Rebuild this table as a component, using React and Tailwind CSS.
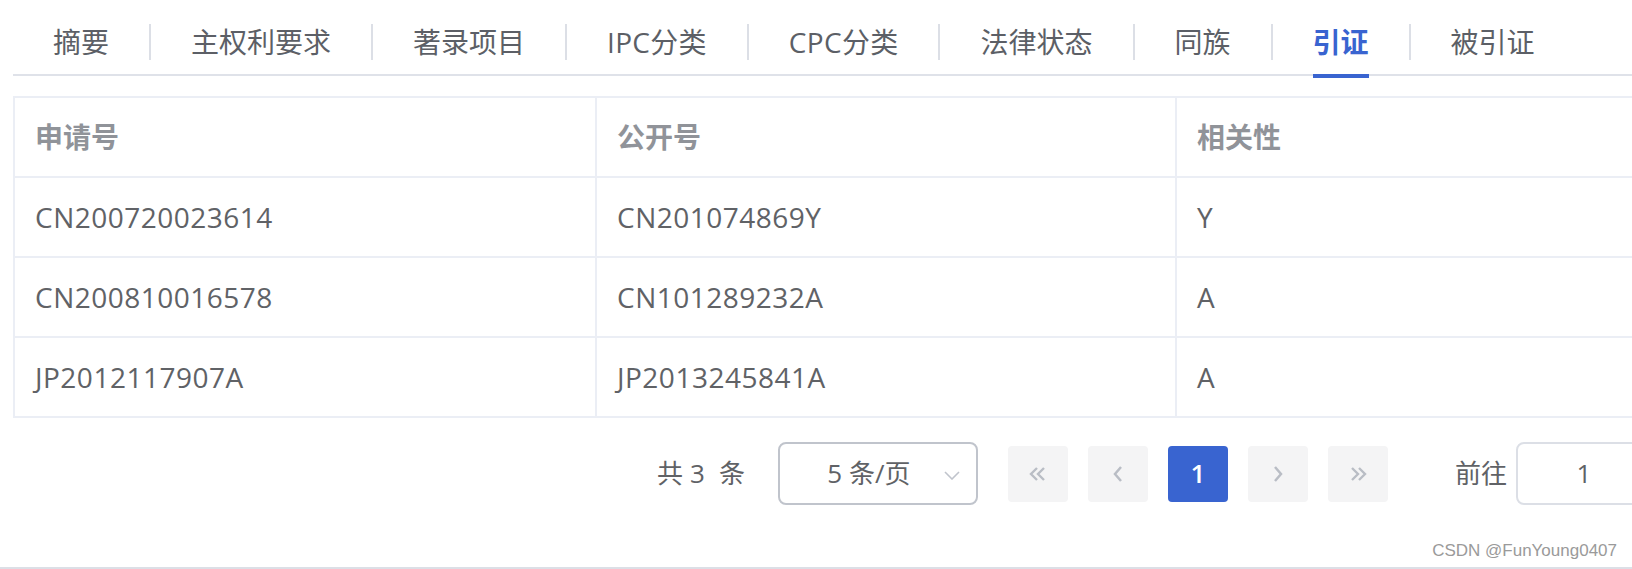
import React, { Fragment } from "react";

const FONT = "font-['Open_Sans','Noto_Sans_CJK_SC',sans-serif]";

const tabs = ["摘要", "主权利要求", "著录项目", "IPC分类", "CPC分类", "法律状态", "同族", "引证", "被引证"];
const rows = [
  ["CN200720023614", "CN201074869Y", "Y"],
  ["CN200810016578", "CN101289232A", "A"],
  ["JP2012117907A", "JP2013245841A", "A"],
];
const widths = ["w-[582px]", "w-[580px]", "w-[582px]"];

function Chevron({ dir = "left", double = false }) {
  if (double) {
    const pts =
      dir === "left"
        ? ["8,2 2,8 8,14", "15,2 9,8 15,14"]
        : ["3,2 9,8 3,14", "10,2 16,8 10,14"];
    return (
      <svg width="18" height="16" viewBox="0 0 18 16" fill="none" stroke="#b9bdc5" strokeWidth="2.4">
        {pts.map((p) => (
          <polyline key={p} points={p} />
        ))}
      </svg>
    );
  }
  const p = dir === "left" ? "9,2 3,9 9,16" : "3,2 9,9 3,16";
  return (
    <svg width="12" height="18" viewBox="0 0 12 18" fill="none" stroke="#b9bdc5" strokeWidth="2.5">
      <polyline points={p} />
    </svg>
  );
}

function Cell({ children, head, w }) {
  return (
    <div
      className={
        w +
        " h-[80px] flex items-center pl-[20px] border-r-2 border-b-2 border-[#ebeef5] text-[28px] " +
        (head ? "font-bold text-[#909399]" : "text-[#606266] tracking-[0.5px]")
      }
    >
      {children}
    </div>
  );
}

export default function App() {
  return (
    <div className={"relative w-[1632px] h-[569px] overflow-hidden bg-white border-b-2 border-[#dcdfe6] " + FONT}>
      {/* Tabs */}
      <div className="ml-[13px] h-[76px] pt-[10px] flex border-b-2 border-[#dfe2e9]">
        {tabs.map((t, i) => (
          <Fragment key={t}>
            {i > 0 && <div className="self-center w-[2px] h-[36px] bg-[#dcdfe6]" />}
            <div
              className={
                "relative px-[40px] flex items-center text-[28px] leading-[36px] whitespace-nowrap " +
                (i === 3 || i === 4 ? "tracking-[0.3px] " : "") +
                (i === 7 ? "text-[#3964d0] font-bold" : "text-[#5c5f66]")
              }
            >
              {t}
              {i === 7 && <div className="absolute left-[40px] right-[40px] bottom-[-4px] h-[4px] bg-[#3964d0]" />}
            </div>
          </Fragment>
        ))}
      </div>

      {/* Table */}
      <div className="mt-[20px] ml-[13px] w-[1746px] border-t-2 border-l-2 border-[#ebeef5]">
        <div className="flex">
          <Cell head w={widths[0]}>申请号</Cell>
          <Cell head w={widths[1]}>公开号</Cell>
          <Cell head w={widths[2]}>相关性</Cell>
        </div>
        {rows.map((r) => (
          <div className="flex" key={r[0]}>
            {r.map((c, j) => (
              <Cell key={j} w={widths[j]}>
                {c}
              </Cell>
            ))}
          </div>
        ))}
      </div>

      {/* Pagination */}
      <div className="mt-[24px] pl-[657px] h-[63px] flex items-center text-[26px] text-[#606266] whitespace-nowrap">
        <div className="flex items-center">
          <span>共</span>
          <span className="ml-[7px]">3</span>
          <span className="ml-[14px]">条</span>
        </div>
        <div className="relative ml-[33px] w-[200px] h-[63px] shrink-0 border-2 border-[#c0c4cc] rounded-[8px] flex items-center justify-center pr-[18px]">
          <span>5 条/页</span>
          <svg
            className="absolute right-[16px] top-[27px]"
            width="16"
            height="9"
            viewBox="0 0 16 9"
            fill="none"
            stroke="#c0c4cc"
            strokeWidth="1.6"
          >
            <polyline points="1,1 8,8 15,1" />
          </svg>
        </div>
        <div className="ml-[30px] flex items-center gap-[20px]">
          <div className="w-[60px] h-[56px] rounded-[4px] bg-[#f4f4f5] flex items-center justify-center">
            <Chevron dir="left" double />
          </div>
          <div className="w-[60px] h-[56px] rounded-[4px] bg-[#f4f4f5] flex items-center justify-center">
            <Chevron dir="left" />
          </div>
          <div className="w-[60px] h-[56px] rounded-[4px] bg-[#3964d0] flex items-center justify-center text-white font-semibold">
            1
          </div>
          <div className="w-[60px] h-[56px] rounded-[4px] bg-[#f4f4f5] flex items-center justify-center">
            <Chevron dir="right" />
          </div>
          <div className="w-[60px] h-[56px] rounded-[4px] bg-[#f4f4f5] flex items-center justify-center">
            <Chevron dir="right" double />
          </div>
        </div>
        <span className="ml-[67px]">前往</span>
        <div className="ml-[9px] w-[136px] h-[63px] shrink-0 border-2 border-[#dcdfe6] rounded-[8px] flex items-center justify-center">
          1
        </div>
      </div>

      {/* Watermark */}
      <div className="absolute right-[15px] top-[542px] text-[17px] leading-none text-[#9a9a9a] font-['Liberation_Sans',sans-serif]">
        CSDN @FunYoung0407
      </div>
    </div>
  );
}
